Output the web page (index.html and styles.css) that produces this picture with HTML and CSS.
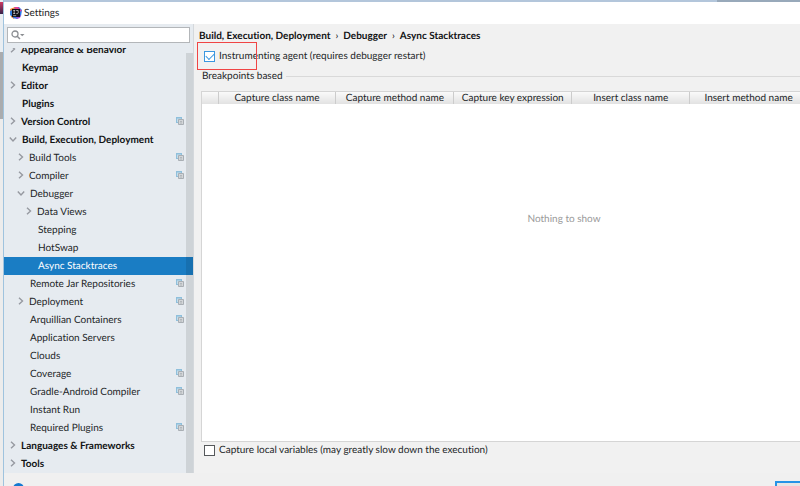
FILE: index.html
```
<!DOCTYPE html>
<html lang="en">
<head>
<meta charset="utf-8">
<title>Settings</title>
<link rel="stylesheet" href="styles.css">
</head>
<body>
<svg class="defs" aria-hidden="true">
  <symbol id="right" viewBox="0 0 8 8"><path d="M2 .8 5.500 4 2 7.200" fill="none" stroke="#9699a0" stroke-width="1.400"/></symbol>
  <symbol id="down" viewBox="0 0 8 8"><path d="M.8 2.500 4 6 7.200 2.500" fill="none" stroke="#9699a0" stroke-width="1.400"/></symbol>
  <symbol id="copy" viewBox="0 0 8 8"><path d="M0 0h6v6H0z" fill="#8fbfdb"/><path d="M1 1.500h4V5H1z" fill="#c3dcea"/><path d="M2.500 2.500h5v5h-5z" fill="#d3d6d9" stroke="#a9afb4"/><path d="M4 4.500h2M4 6h2" stroke="#a4a9ae" stroke-width=".7"/></symbol>
  <symbol id="logo" viewBox="0 0 12 12"><path d="M0 2 5 0 8 5 4 12 1 10z" fill="#f58a35"/><path d="M0 4 4 2v9L0 8z" fill="#357edc"/><path d="M5 0 9 0 12 3 11 9 7 12 3 11z" fill="#2878ee"/><path d="M4 0 8 0 12 4 8 5z" fill="#e7408c"/><path d="M6 10 11 8 10 11 7 12z" fill="#a351d2"/><path d="M2 2h8v8H2z" fill="#101018"/><path d="M3.200 3.500h2M4.200 3.500v3M3.200 6.500h2M6.200 3.500h2v2.500l-.6.6H6.300M3.200 8.700h3" fill="none" stroke="#fff" stroke-width=".6"/></symbol>
</svg>
<div class="screen">
  <div class="backdrop"><i class="sliver-logo"></i><i class="sliver-gray"></i><i class="sliver-light"></i></div>
  <div class="dialog">
    <header class="titlebar"><svg class="logo"><use href="#logo"/></svg><span>Settings</span></header>
    <div class="content">
      <aside class="sidebar">
        <div class="search">
          <svg class="search-icon" viewBox="0 0 14 10"><circle cx="4" cy="4" r="3" fill="none" stroke="#8b8e92" stroke-width="1.300"/><path d="M6.200 6.200 9 9" stroke="#8b8e92" stroke-width="1.500"/><path d="M9 4h4.500L11.200 6.300z" fill="#8b8e92"/></svg>
          <input type="text" aria-label="Search settings">
        </div>
        <nav class="tree">
          <div class="rows">
            <a href="#" class="row top"><svg class="arrow"><use href="#right"/></svg>Appearance &amp; Behavior</a>
            <a href="#" class="row top leaf">Keymap</a>
            <a href="#" class="row top"><svg class="arrow"><use href="#right"/></svg>Editor</a>
            <a href="#" class="row top leaf">Plugins</a>
            <a href="#" class="row top"><svg class="arrow"><use href="#right"/></svg>Version Control<svg class="copy"><use href="#copy"/></svg></a>
            <a href="#" class="row top open"><svg class="arrow"><use href="#down"/></svg>Build, Execution, Deployment</a>
            <a href="#" class="row l2"><svg class="arrow"><use href="#right"/></svg>Build Tools<svg class="copy"><use href="#copy"/></svg></a>
            <a href="#" class="row l2"><svg class="arrow"><use href="#right"/></svg>Compiler<svg class="copy"><use href="#copy"/></svg></a>
            <a href="#" class="row l2 open"><svg class="arrow"><use href="#down"/></svg>Debugger</a>
            <a href="#" class="row l3"><svg class="arrow"><use href="#right"/></svg>Data Views</a>
            <a href="#" class="row l3 leaf">Stepping</a>
            <a href="#" class="row l3 leaf">HotSwap</a>
            <a href="#" class="row l3 leaf selected" aria-current="page">Async Stacktraces</a>
            <a href="#" class="row l2 leaf">Remote Jar Repositories<svg class="copy"><use href="#copy"/></svg></a>
            <a href="#" class="row l2"><svg class="arrow"><use href="#right"/></svg>Deployment<svg class="copy"><use href="#copy"/></svg></a>
            <a href="#" class="row l2 leaf">Arquillian Containers<svg class="copy"><use href="#copy"/></svg></a>
            <a href="#" class="row l2 leaf">Application Servers</a>
            <a href="#" class="row l2 leaf">Clouds</a>
            <a href="#" class="row l2 leaf">Coverage<svg class="copy"><use href="#copy"/></svg></a>
            <a href="#" class="row l2 leaf">Gradle-Android Compiler<svg class="copy"><use href="#copy"/></svg></a>
            <a href="#" class="row l2 leaf">Instant Run</a>
            <a href="#" class="row l2 leaf">Required Plugins<svg class="copy"><use href="#copy"/></svg></a>
            <a href="#" class="row top"><svg class="arrow"><use href="#right"/></svg>Languages &amp; Frameworks</a>
            <a href="#" class="row top"><svg class="arrow"><use href="#right"/></svg>Tools</a>
          </div>
          <div class="thumb"></div>
        </nav>
      </aside>
      <main class="pane">
        <h1 class="crumbs"><span>Build, Execution, Deployment</span><span class="sep">›</span><span>Debugger</span><span class="sep">›</span><span>Async Stacktraces</span></h1>
        <label class="check agent"><input type="checkbox" checked>Instrumenting agent (requires debugger restart)<span class="highlight"></span></label>
        <h2 class="group">Breakpoints based</h2>
        <div class="grid">
          <table>
            <thead><tr><th class="tick"></th><th>Capture class name</th><th>Capture method name</th><th>Capture key expression</th><th>Insert class name</th><th>Insert method name</th><th></th></tr></thead>
          </table>
          <p class="empty">Nothing to show</p>
        </div>
        <label class="check"><input type="checkbox">Capture local variables (may greatly slow down the execution)</label>
      </main>
    </div>
    <footer class="footer"><button class="help" aria-label="Help"></button><button class="ok">OK</button></footer>
  </div>
</div>
</body>
</html>
```
FILE: styles.css
```
* { box-sizing: border-box; }
body {
  margin: 0;
  height: 100vh;
  overflow: hidden;
  background: #f0f0f0;
  color: #222527;
  font: 10px/17px Lato, "Open Sans", sans-serif;
  font-variant-ligatures: none;
  text-rendering: geometricPrecision;
}
.defs { position: absolute; width: 0; height: 0; }
.screen { display: flex; height: 100%; min-width: 930px; }

.backdrop { flex: none; width: 3px; display: flex; flex-direction: column; background: #e9eef2; }
.sliver-logo { height: 12px; margin-top: 2px; background: linear-gradient(#cf3a62, #35224a); }
.sliver-gray { height: 67px; margin-top: 38px; background: #aaacae; }
.sliver-light { flex: 1; background: #ececec; }

.dialog {
  flex: 1;
  min-width: 0;
  display: flex;
  flex-direction: column;
  padding-top: 2px;
  border-left: 1px solid #9fc3de;
  background: linear-gradient(90deg, #b3c6db 77%, #98a9ba 77%) top / 100% 2px no-repeat;
}
.titlebar {
  flex: none;
  height: 22px;
  padding-left: 6px;
  display: flex;
  align-items: center;
  gap: 2px;
  background: #fff;
  color: #222;
}
.logo { width: 12px; height: 12px; }

.content { flex: 1; min-height: 0; display: flex; }
.sidebar {
  flex: none;
  width: 190px;
  display: flex;
  flex-direction: column;
  background: #e6ebf0;
  border-right: 1px solid #d4d8dc;
}
.search {
  flex: none;
  height: 16px;
  margin: 3px 3px 5px;
  padding-left: 3px;
  display: flex;
  align-items: center;
  background: #fff;
  border: 1px solid #b3b6b9;
}
.search-icon { width: 14px; height: 10px; flex: none; }
.search input { flex: 1; min-width: 0; border: 0; padding: 0; outline: 0; height: 12px; background: none; font: inherit; }

.tree { flex: 1; min-height: 0; display: flex; overflow: hidden; position: relative; }
.rows { flex: 1; margin-top: -7px; }
.row {
  display: flex;
  align-items: center;
  height: 18px;
  padding-right: 9px;
  padding-top: 1px;
  color: inherit;
  text-decoration: none;
  white-space: nowrap;
}
.arrow { flex: none; width: 8px; height: 8px; margin: 0 4px 3px 0; }
.open .arrow { margin-right: 5px; }
.copy { width: 8px; height: 8px; margin: 0 0 3px auto; }
.top { padding-left: 5px; font-weight: 700; color: #111314; }
.l2 { padding-left: 13px; }
.l3 { padding-left: 21px; }
.top.leaf { padding-left: 18px; }
.l2.leaf { padding-left: 26px; }
.l3.leaf { padding-left: 34px; }
.selected { background: #1a7dc4; color: #fff; }
.thumb { position: absolute; right: 0; top: 5px; bottom: 0; width: 7px; background: rgba(0, 0, 0, .1); }

.pane { flex: 1; min-width: 0; display: flex; flex-direction: column; padding: 4px 3px 14px 5px; background: #f1f1f1; }
.crumbs { margin: 0; display: flex; gap: 5px; font-size: 10px; color: #111314; white-space: nowrap; }
.sep { font-weight: 400; }
.check { position: relative; display: flex; align-items: center; gap: 4px; padding-left: 5px; }
.agent { margin-top: 3px; }
.check input {
  appearance: none;
  width: 11px;
  height: 11px;
  margin: 0;
  background: #fff;
  border: 1px solid #55585b;
  display: grid;
  place-items: center;
}
.check input:checked { border-color: #3b97e0; }
.check input:checked::before {
  content: "";
  width: 7px;
  height: 4px;
  border: solid #3b97e0;
  border-width: 0 0 1px 1px;
  transform: translateY(-1px) rotate(-45deg);
}
.highlight { position: absolute; left: -2px; top: -6px; width: 60px; height: 28px; border: 1px solid #f04545; }
.group { margin: 3px 0 6px 3px; display: flex; align-items: center; gap: 3px; font-size: 10px; font-weight: 400; }
.group::after { content: ""; flex: 1; height: 1px; background: #d9d9d9; }
.grid { flex: 1; min-height: 0; margin-left: 2px; background: #fff; border: 1px solid #d5d5d5; overflow: hidden; }
.grid table { width: 100%; border-collapse: collapse; table-layout: fixed; }
.grid th {
  height: 12px;
  padding: 0;
  border-right: 1px solid #ccc;
  background: linear-gradient(#fafafa, #e2e2e2);
  font-weight: 400;
  line-height: 12px;
  white-space: nowrap;
}
.grid .tick { width: 16px; }
.empty { margin: 107px 0 0; text-align: center; color: #999; }

.footer { flex: none; height: 13px; padding: 8px 97px 0 9px; display: flex; justify-content: space-between; align-items: flex-start; }
.help { flex: none; width: 11px; height: 11px; padding: 0; margin-top: 2px; border: 0; border-radius: 50%; background: #1479d0; }
.ok { flex: none; width: 58px; height: 20px; padding: 0; border: 2px solid #2693e6; background: #e5e5e5; font: inherit; }
```
